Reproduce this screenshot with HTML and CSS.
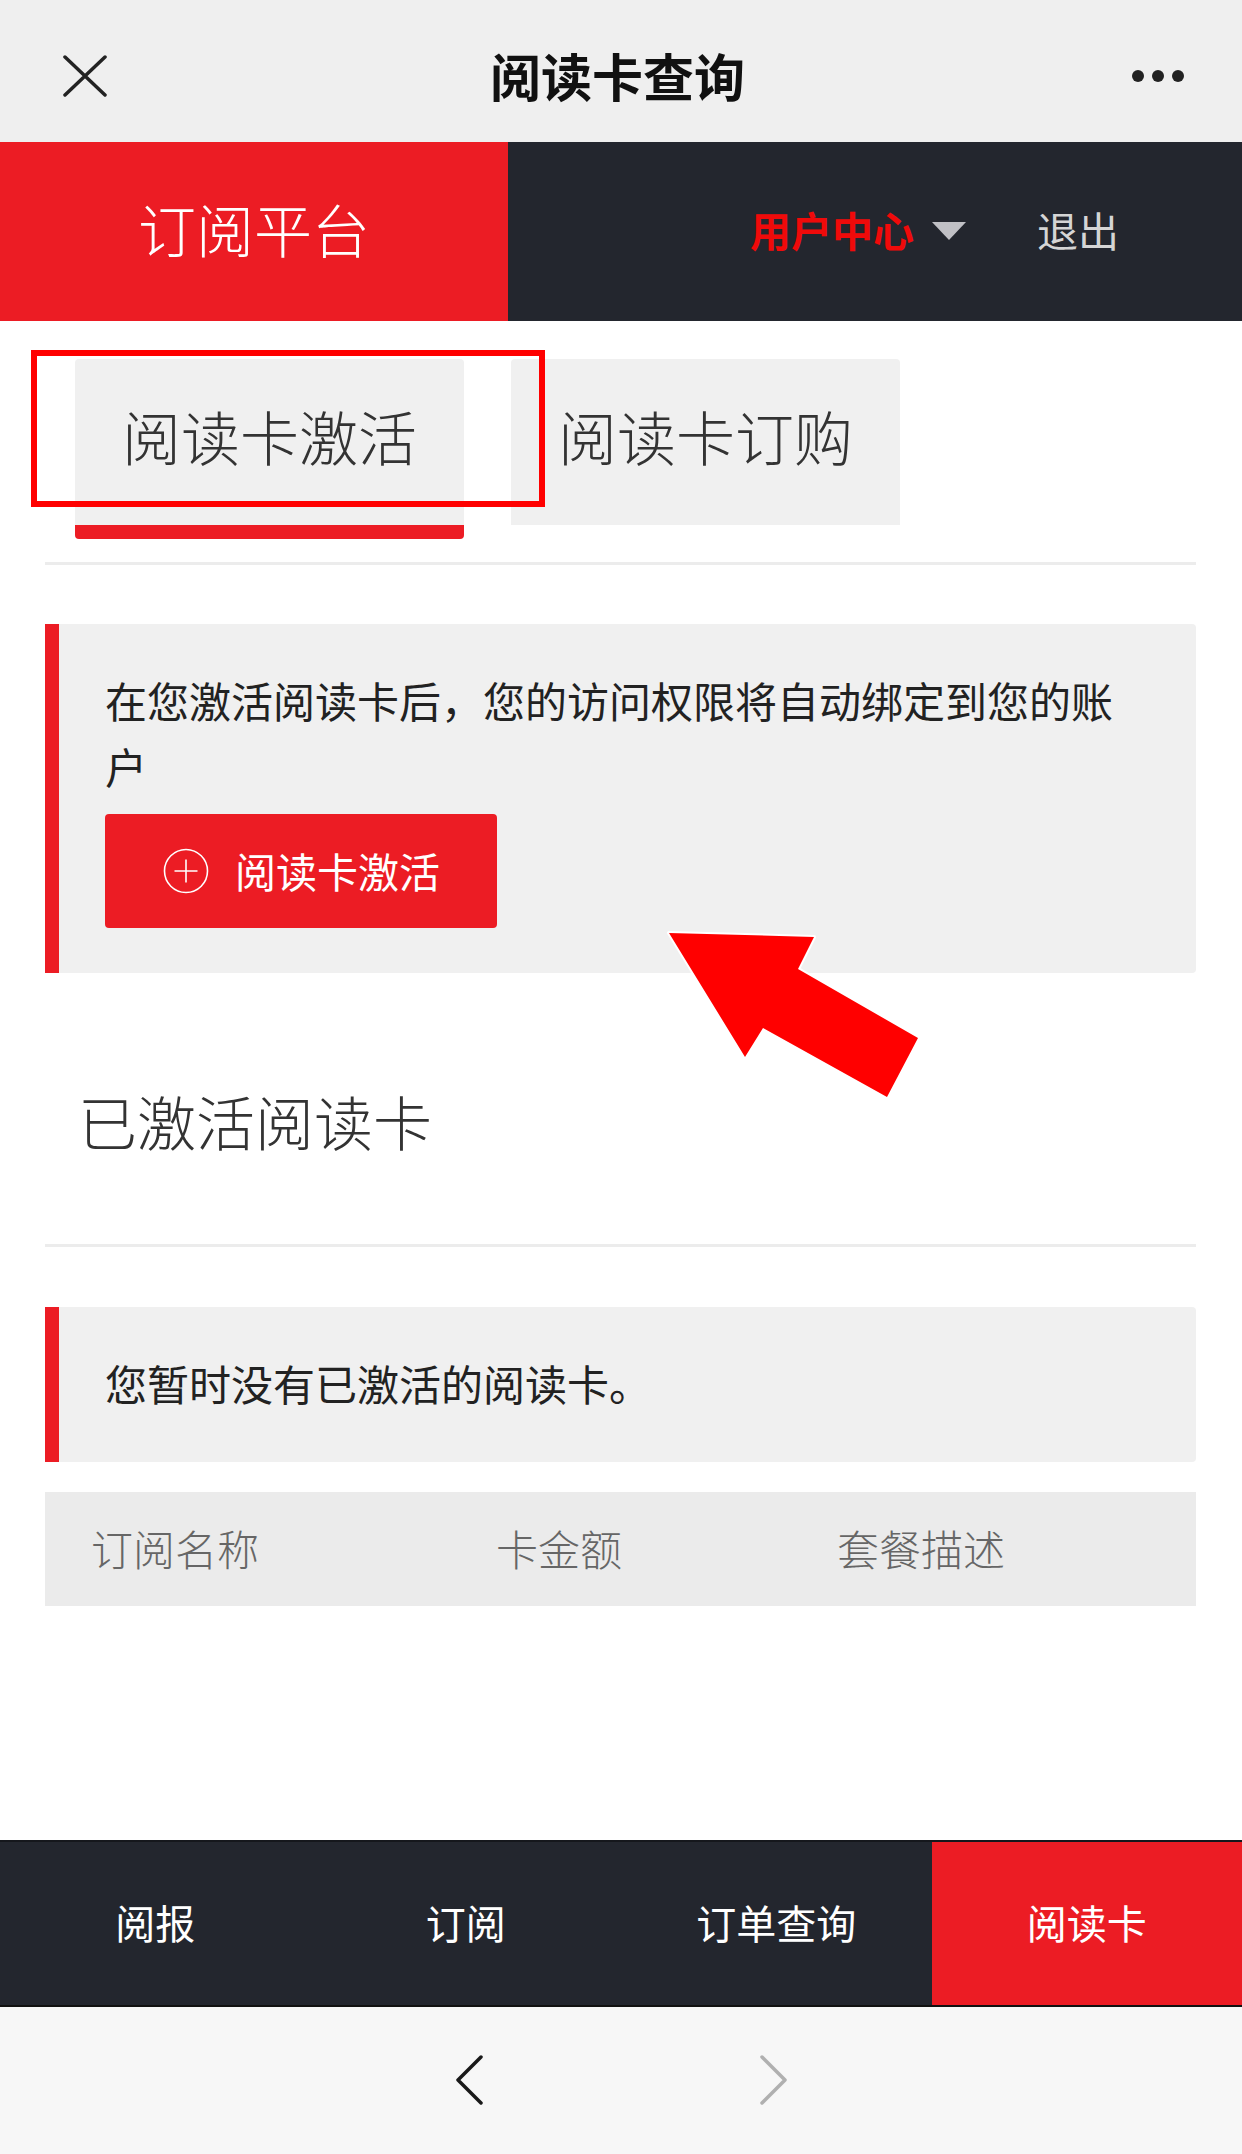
FILE: index.html
```
<!DOCTYPE html>
<html lang="zh-CN">

<head>
	<meta charset="utf-8">
	<meta name="viewport" content="width=device-width, initial-scale=1.0">
	<title>阅读卡查询</title>
	<link rel="stylesheet" href="styles.css">
</head>

<body>
	<div class="page">
		<div class="titlebar">
			<svg class="close" width="44" height="42" viewBox="0 0 44 42">
				<path d="M2 2 L42 40 M42 2 L2 40" stroke="#222" stroke-width="3.5" stroke-linecap="round" fill="none"/>
			</svg>
			<div class="title">阅读卡查询</div>
			<div class="more"><i></i><i></i><i></i></div>
		</div>

		<div class="topnav">
			<div class="brand">订阅平台</div>
			<div class="usermenu">
				<span class="user">用户中心</span>
				<span class="caret"></span>
				<span class="logout">退出</span>
			</div>
		</div>

		<div class="main">
			<div class="tabs">
				<div class="tab active">阅读卡激活</div>
				<div class="tab">阅读卡订购</div>
			</div>
			<div class="rule"></div>

			<div class="notice activate">
				<p>在您激活阅读卡后，您的访问权限将自动绑定到您的账户</p>
				<a class="btn">
					<svg width="46" height="46" viewBox="0 0 46 46">
						<circle cx="23" cy="23" r="21.5" stroke="#fff" stroke-width="1.6" fill="none"/>
						<path d="M23 11.5 V34.5 M11.5 23 H34.5" stroke="#fff" stroke-width="1.6"/>
					</svg>
					<span>阅读卡激活</span>
				</a>
			</div>

			<h2>已激活阅读卡</h2>
			<div class="rule"></div>

			<div class="notice empty">
				<p>您暂时没有已激活的阅读卡。</p>
			</div>

			<div class="thead">
				<span>订阅名称</span>
				<span>卡金额</span>
				<span>套餐描述</span>
			</div>
		</div>

		<div class="bottomnav">
			<div>阅报</div>
			<div>订阅</div>
			<div>订单查询</div>
			<div class="current">阅读卡</div>
		</div>

		<div class="browserbar">
			<svg width="30" height="52" viewBox="0 0 30 52">
				<path d="M26 2 L3 25 L26 48" stroke="#1a1a1a" stroke-width="3.5" stroke-linecap="round" stroke-linejoin="round" fill="none"/>
			</svg>
			<svg width="30" height="52" viewBox="0 0 30 52">
				<path d="M4 2 L27 25 L4 48" stroke="#b0b0b0" stroke-width="3.5" stroke-linecap="round" stroke-linejoin="round" fill="none"/>
			</svg>
		</div>

		<!-- пометки поверх скриншота -->
		<div class="mark-box"></div>
		<svg class="mark-arrow" width="300" height="220" viewBox="0 0 300 220">
			<polygon points="29,33 174,37 158,69 278,138 247,197 123,128 105,157" fill="#ff0000" stroke="#fff" stroke-width="4" stroke-linejoin="round" paint-order="stroke"/>
		</svg>
	</div>
</body>

</html>
```

FILE: styles.css
```
html, body {
	margin:0;
	padding:0;
}

body {
	font-family:"Noto Sans CJK SC", "Noto Sans", sans-serif;
	background-color:#fff;
}

.page {
	position:relative;
	width:1242px;
	height:2154px;
	display:flex;
	flex-direction:column;
	overflow:hidden;
}

/* title bar */
.titlebar {
	height:142px;
	flex:none;
	background-color:#efefef;
	display:flex;
	align-items:center;
	padding:10px 58px 0 63px;
	box-sizing:border-box;
}

.titlebar .close {
	flex:none;
	margin-top:-1px;
}

.titlebar .title {
	flex:1;
	text-align:center;
	font-size:51px;
	font-weight:bold;
	color:#111;
	margin-left:-4px;
	margin-top:-2px;
}

.more {
	display:flex;
	gap:8px;
	width:52px;
}

.more i {
	width:12px;
	height:12px;
	border-radius:50%;
	background-color:#222;
}

/* top nav */
.topnav {
	height:179px;
	flex:none;
	display:flex;
	background-color:#23262e;
}

.brand {
	width:508px;
	box-sizing:border-box;
	padding-bottom:8px;
	background-color:#ec1c24;
	color:#fff;
	font-size:58px;
	font-weight:300;
	display:flex;
	align-items:center;
	justify-content:center;
}

.usermenu {
	flex:1;
	display:flex;
	align-items:center;
	padding-left:242px;
	padding-bottom:6px;
}

.user {
	color:#f00a0a;
	font-size:41px;
	font-weight:bold;
}

.caret {
	width:0;
	height:0;
	border-left:17px solid transparent;
	border-right:17px solid transparent;
	border-top:18px solid #c0c0c5;
	margin-left:18px;
	margin-top:4px;
}

.logout {
	color:#d5d5d5;
	font-size:41px;
	margin-left:71px;
}

/* content */
.main {
	flex:1;
	padding:0 46px 0 45px;
}

.tabs {
	display:flex;
	align-items:flex-start;
	gap:47px;
	margin-top:38px;
	padding-left:30px;
}

.tab {
	height:166px;
	width:389px;
	box-sizing:border-box;
	padding-bottom:14px;
	background-color:#f0f0f0;
	border-radius:4px 4px 0 0;
	color:#333;
	font-size:59px;
	font-weight:300;
	display:flex;
	align-items:center;
	justify-content:center;
}

.tab.active {
	height:180px;
	border-bottom:14px solid #ec1c24;
	border-radius:4px;
}

.rule {
	height:3px;
	background-color:#ececec;
	margin-top:23px;
}

.notice {
	background-color:#f0f0f0;
	border-left:14px solid #ec1c24;
	border-radius:0 4px 4px 0;
	padding:43px 60px 45px 46px;
	color:#222;
	font-size:42px;
}

.notice p {
	margin:0;
	line-height:66px;
}

.activate {
	margin-top:59px;
}

.btn {
	display:flex;
	align-items:center;
	width:392px;
	height:114px;
	box-sizing:border-box;
	margin-top:15px;
	padding-left:58px;
	padding-bottom:2px;
	background-color:#ec1c24;
	border-radius:4px;
	color:#fff;
	font-size:41px;
}

.btn svg {
	margin-right:26px;
	margin-top:2px;
}

h2 {
	margin:108px 0 0 0;
	padding-left:33px;
	font-size:59px;
	font-weight:300;
	line-height:80px;
	color:#333;
}

h2 + .rule {
	margin-top:83px;
}

.empty {
	margin-top:60px;
	height:155px;
	box-sizing:border-box;
	padding:0 46px 4px 46px;
	display:flex;
	align-items:center;
}

.thead {
	margin-top:30px;
	height:114px;
	box-sizing:border-box;
	padding-bottom:4px;
	background-color:#ebebeb;
	display:grid;
	grid-template-columns:405px 341px 1fr;
	align-items:center;
	padding-left:46px;
	color:#666;
	font-size:42px;
	font-weight:300;
}

/* bottom nav */
.bottomnav {
	height:167px;
	flex:none;
	display:grid;
	grid-template-columns:repeat(4, 1fr);
	background-color:#23262e;
	border-top:2px solid #15171c;
	border-bottom:2px solid #111;
	box-sizing:border-box;
}

.bottomnav div {
	display:flex;
	align-items:center;
	justify-content:center;
	padding-bottom:4px;
	color:#fff;
	font-size:40px;
}

.bottomnav .current {
	background-color:#ec1c24;
}

.browserbar {
	height:147px;
	flex:none;
	background-color:#f7f7f7;
	display:flex;
	align-items:center;
	justify-content:center;
	gap:273px;
}

/* annotations */
.mark-box {
	position:absolute;
	left:31px;
	top:350px;
	width:514px;
	height:157px;
	box-sizing:border-box;
	border:6px solid #f00;
}

.mark-arrow {
	position:absolute;
	left:640px;
	top:900px;
}
```
